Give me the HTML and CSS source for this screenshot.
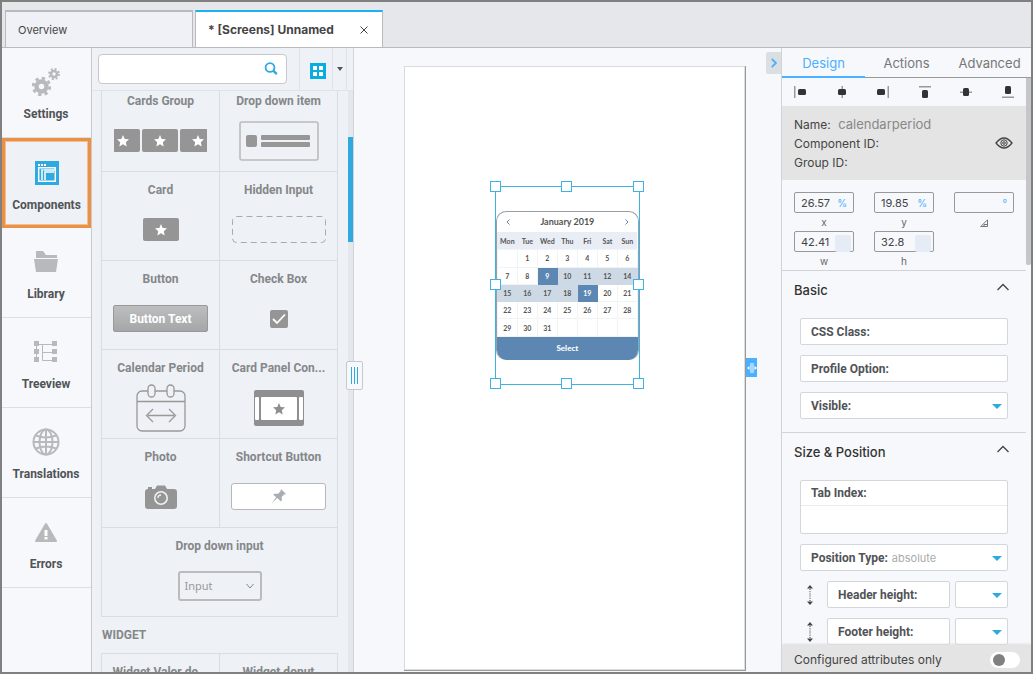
FILE: index.html
```html
<!DOCTYPE html>
<html lang="en">
<head>
<meta charset="utf-8">
<title>Screens editor</title>
<link rel="stylesheet" href="styles.css">
</head>
<body>
<svg class="defs" aria-hidden="true">
  <symbol id="star" viewBox="0 0 12 12"><path fill="currentColor" d="M6 0l1.700 3.900 4.300.4-3.200 2.900.9 4.300L6 9.300l-3.700 2.200.9-4.300L0 4.300l4.300-.4z"/></symbol>
  <symbol id="chevron" viewBox="0 0 14 8"><path fill="none" stroke="#444" stroke-width="1.300" d="M1.500 7L7 1.500 12.500 7"/></symbol>
  <symbol id="updown" viewBox="0 0 8 20"><path fill="#444" d="M4 0l3 3.500H1zM4 20l3-3.500H1z"/><path stroke="#555" stroke-width="1.200" stroke-dasharray="1 1.200" d="M4 4v12"/></symbol>
</svg>

<header class="tabs">
  <button class="tab">Overview</button>
  <button class="tab active"><span>* [Screens] Unnamed</span>
    <svg class="close" viewBox="0 0 8 8"><path stroke="#444" stroke-width="1" d="M.5.5l7 7M7.500.5l-7 7"/></svg>
  </button>
</header>

<div class="workspace">
  <nav class="nav">
    <button class="nav-item"><span class="nav-icon">
      <svg width="28" height="28" viewBox="0 0 28 28" fill="none" stroke="#b8b9bb">
        <circle cx="9.500" cy="18.500" r="5" stroke-width="4.400"/><circle cx="9.500" cy="18.500" r="8.300" stroke-width="2.800" stroke-dasharray="3.300 3.219"/>
        <circle cx="22" cy="6" r="3" stroke-width="2.600"/><circle cx="22" cy="6" r="5" stroke-width="2" stroke-dasharray="2 1.927"/>
      </svg></span>Settings</button>
    <button class="nav-item selected"><span class="nav-icon">
      <svg width="24" height="24" viewBox="0 0 24 24"><path fill="#2eaae0" d="M0 0h24v24H0z"/><path fill="#fff" d="M3 3h2v2H3zM6 3h2v2H6zM9 3h2v2H9z"/><path fill="none" stroke="#fff" stroke-width="1.500" d="M3.700 6.700h16.600v13.600H3.700zM7 8v11M10 19V11h9M8.500 9h11"/></svg></span>Components</button>
    <button class="nav-item"><span class="nav-icon">
      <svg width="26" height="24" viewBox="0 0 26 24" fill="#b8b9bb"><path d="M3 1h7l3 4h11v3H3zM1 9h24l-2 13H3z"/></svg></span>Library</button>
    <button class="nav-item"><span class="nav-icon">
      <svg width="24" height="22" viewBox="0 0 24 22"><path fill="#b8b9bb" d="M0 0h5v5H0zM0 8h5v5H0zM0 16h5v5H0zM18 0h5v5h-5zM18 8h5v5h-5zM18 16h5v5h-5z"/><path fill="none" stroke="#b8b9bb" d="M2.500 4v13M5 3.500h14M8.500 3.500v16H19M8.500 11.500H19"/></svg></span>Treeview</button>
    <button class="nav-item"><span class="nav-icon">
      <svg width="28" height="28" viewBox="0 0 28 28" fill="none" stroke="#b8b9bb" stroke-width="2"><circle cx="14" cy="14" r="12.500"/><ellipse cx="14" cy="14" rx="6.500" ry="12.500"/><path d="M14 1v26M1 14h26M4 7.500q10 4 20 0M4 20.500q10-4 20 0"/></svg></span>Translations</button>
    <button class="nav-item"><span class="nav-icon">
      <svg width="24" height="22" viewBox="0 0 24 22"><path fill="#b8b9bb" stroke="#b8b9bb" stroke-width="2" stroke-linejoin="round" d="M12 3L22 20H2z"/><path fill="#fff" d="M10.500 9h3v6h-3zM10.500 16h3v2.500h-3z"/></svg></span>Errors</button>
  </nav>

  <aside class="palette">
    <div class="palette-bar">
      <div class="search">
        <input type="text" aria-label="Search components">
        <svg width="14" height="14" viewBox="0 0 14 14" fill="none" stroke="#2eaae0"><circle cx="6" cy="5.500" r="4.400" stroke-width="1.800"/><path stroke-width="2.400" d="M9.200 8.700l3.600 3.500"/></svg>
      </div>
      <button class="view-btn" aria-label="Grid view"><svg width="16" height="16" viewBox="0 0 16 16"><path fill="#0aade2" d="M0 0h16v16H0z"/><path fill="#fff" d="M3 3h4v4H3zM9 3h4v4H9zM3 9h4v4H3zM9 9h4v4H9z"/></svg></button>
      <button class="view-menu" aria-label="View options"><svg width="6" height="4" viewBox="0 0 6 4"><path fill="#555" d="M0 0h6L3 4z"/></svg></button>
    </div>
    <div class="palette-body">
      <div class="palette-list">
        <div class="grid first">
          <button class="cell">Cards Group<span class="art cards"><i class="card left"><svg><use href="#star"/></svg></i><i class="card"><svg><use href="#star"/></svg></i><i class="card right"><svg><use href="#star"/></svg></i></span></button>
          <button class="cell">Drop down item<span class="art"><svg width="80" height="40" viewBox="0 0 80 40"><rect x="1" y="1" width="78" height="38" rx="2" fill="none" stroke="#bbb" stroke-width="1.600"/><g fill="#979797"><rect x="7" y="14" width="11" height="12" rx="2"/><rect x="22" y="14" width="49" height="5" rx="1"/><rect x="22" y="21" width="49" height="5" rx="1"/></g></svg></span></button>
          <button class="cell">Card<span class="art"><i class="card"><svg><use href="#star"/></svg></i></span></button>
          <button class="cell">Hidden Input<span class="art"><svg width="94" height="28" viewBox="0 0 94 28"><rect x=".5" y=".5" width="93" height="26" rx="4" fill="none" stroke="#aaa" stroke-dasharray="6 4"/></svg></span></button>
          <button class="cell">Button<span class="art"><span class="btn-art">Button Text</span></span></button>
          <button class="cell">Check Box<span class="art"><svg width="20" height="20" viewBox="0 0 20 20"><rect x="1" y="1" width="18" height="18" rx="2" fill="#959595"/><path fill="none" stroke="#fff" stroke-width="1.800" d="M4 10l4 4 8-8.500"/></svg></span></button>
          <button class="cell">Calendar Period<span class="art"><svg width="50" height="48" viewBox="0 0 50 48" fill="#eef1f6" stroke="#999" stroke-width="1.300"><rect x="1" y="7" width="48" height="40" rx="5"/><path stroke-width="1.600" d="M1 17.500h48"/><rect x="12" y="1" width="7" height="12" rx="3.500"/><rect x="31" y="1" width="7" height="12" rx="3.500"/><path fill="none" d="M12 31.500h26M17 25l-6.500 6.500L17 38M33 25l6.500 6.500L33 38"/></svg></span></button>
          <button class="cell">Card Panel Con...<span class="art"><svg width="50" height="36" viewBox="0 0 50 36"><rect width="50" height="36" rx="2" fill="#8f8f8f"/><rect x="1" y="7" width="4" height="23" rx="1" fill="#fff"/><rect x="45" y="7" width="4" height="23" rx="1" fill="#fff"/><rect x="7" y="7" width="36" height="23" rx="1" fill="#fff"/><use href="#star" x="19" y="13" width="12" height="12" color="#8f8f8f"/></svg></span></button>
          <button class="cell">Photo<span class="art"><svg width="32" height="24" viewBox="0 0 32 24"><path fill="#959595" d="M3 4V2h4v2h3l2-3.500h8L22 4h7q3 0 3 3v14q0 3-3 3H3q-3 0-3-3V7q0-3 3-3z"/><g fill="none" stroke="#eef1f6"><circle cx="16" cy="13" r="6.200" stroke-width="1.600"/><path d="M13 13q0-3 3-3" stroke-width="1.300"/></g></svg></span></button>
          <button class="cell">Shortcut Button<span class="art"><span class="shortcut-art"><svg width="15" height="15" viewBox="0 0 15 15"><path fill="#aaaeb3" d="M10 0l5 5-2 .6-2.300 2.300.2 3.800-1.200.6L6.300 9 .5 14.500 5.200 8.300 2.300 5.700l.8-1 4 .1L9.500 2.200z"/></svg></span></span></button>
          <button class="cell wide">Drop down input<span class="art"><span class="input-art">Input<svg width="8" height="6" viewBox="0 0 8 6"><path fill="none" stroke="#888" d="M.5 1L4 5 7.500 1"/></svg></span></span></button>
        </div>
        <h2 class="group-title">WIDGET</h2>
        <div class="grid">
          <button class="cell">Widget Valor de...</button>
          <button class="cell">Widget donut</button>
        </div>
      </div>
      <div class="scroll-track"><div class="scroll-thumb"></div></div>
    </div>
    <button class="grip" aria-label="Resize palette"><i></i><i></i><i></i></button>
  </aside>

  <main class="canvas">
    <div class="screen">
      <div class="selection">
        <div class="calendar">
          <div class="cal-head"><svg viewBox="0 0 4 6"><path d="M3.500.5L1 3l2.500 2.500"/></svg><span>January 2019</span><svg viewBox="0 0 4 6"><path d="M.5.5L3 3 .5 5.500"/></svg></div>
          <table class="cal-table">
            <thead><tr><th>Mon</th><th>Tue</th><th>Wed</th><th>Thu</th><th>Fri</th><th>Sat</th><th>Sun</th></tr></thead>
            <tbody>
              <tr><td></td><td>1</td><td>2</td><td>3</td><td>4</td><td>5</td><td>6</td></tr>
              <tr><td>7</td><td>8</td><td class="edge">9</td><td class="in">10</td><td class="in">11</td><td class="in">12</td><td class="in">14</td></tr>
              <tr><td class="in">15</td><td class="in">16</td><td class="in">17</td><td class="in">18</td><td class="edge">19</td><td>20</td><td>21</td></tr>
              <tr><td>22</td><td>23</td><td>24</td><td>25</td><td>26</td><td>27</td><td>28</td></tr>
              <tr><td>29</td><td>30</td><td>31</td><td></td><td></td><td></td><td></td></tr>
            </tbody>
          </table>
          <button class="cal-select">Select</button>
        </div>
        <i class="h nw"></i><i class="h n"></i><i class="h ne"></i><i class="h w"></i><i class="h e"></i><i class="h sw"></i><i class="h s"></i><i class="h se"></i>
      </div>
      <button class="screen-grip" aria-label="Resize screen"><svg width="10" height="12" viewBox="0 0 10 12" fill="#fff"><path d="M3.500 1h1v10h-1zM5.500 1h1v10h-1zM0 6l2.500-2v4zM10 6L7.500 4v4z"/></svg></button>
    </div>
    <button class="collapse" aria-label="Collapse panel"><svg width="6" height="10" viewBox="0 0 6 10"><path fill="none" stroke="#4ab0ff" stroke-width="1.800" d="M.8 1L5 5 .8 9"/></svg></button>
  </main>

  <aside class="props">
    <div class="prop-tabs"><button class="on">Design</button><button>Actions</button><button>Advanced</button></div>
    <div class="prop-body">
      <div class="prop-scroll">
        <div class="align-bar">
          <button aria-label="Align left"><svg viewBox="0 0 12 12"><path fill="#999" d="M0 0h1.500v12H0z"/><rect x="4" y="3" width="8" height="6" rx="1.500"/></svg></button>
          <button aria-label="Align center"><svg viewBox="0 0 12 12"><path fill="#999" d="M5.500 0H7v12H5.500z"/><rect x="2" y="3" width="8" height="6" rx="1.500"/></svg></button>
          <button aria-label="Align right"><svg viewBox="0 0 12 12"><path fill="#999" d="M10.500 0H12v12h-1.500z"/><rect y="3" width="8" height="6" rx="1.500"/></svg></button>
          <button aria-label="Align top"><svg viewBox="0 0 12 12"><path fill="#999" d="M0 0h12v1.500H0z"/><rect x="3" y="4" width="6" height="8" rx="1.500"/></svg></button>
          <button aria-label="Align middle"><svg viewBox="0 0 12 12"><path fill="#999" d="M0 5.500h12V7H0z"/><rect x="3" y="2" width="6" height="8" rx="1.500"/></svg></button>
          <button aria-label="Align bottom"><svg viewBox="0 0 12 12"><path fill="#999" d="M0 10.500h12V12H0z"/><rect x="3" width="6" height="8" rx="1.500"/></svg></button>
        </div>
        <div class="identity">
          <div><div>Name: <span class="comp-name">calendarperiod</span></div><div>Component ID:</div><div>Group ID:</div></div>
          <button aria-label="Toggle visibility"><svg width="18" height="12" viewBox="0 0 18 12" fill="none" stroke="#444"><path stroke-width="1.300" d="M1 6q8-10 16 0Q9 16 1 6z"/><circle cx="9" cy="6" r="3.200"/><circle cx="9" cy="6" r="1.300"/></svg></button>
        </div>
        <div class="geometry">
          <label class="geo"><span class="geo-box"><input type="text" value="26.57"><b>%</b></span>x</label>
          <label class="geo"><span class="geo-box"><input type="text" value="19.85"><b>%</b></span>y</label>
          <label class="geo"><span class="geo-box"><input type="text" value="" aria-label="Rotation"><b>°</b></span><svg width="8" height="8" viewBox="0 0 8 8"><path fill="none" stroke="#777" d="M.8 7.500h6.700V.8zM4 7.500V5.500h3"/></svg></label>
          <label class="geo"><span class="geo-box"><input type="text" value="42.41"><i></i></span>w</label>
          <label class="geo"><span class="geo-box"><input type="text" value="32.8"><i></i></span>h</label>
        </div>
        <section class="section">
          <button class="section-head">Basic<svg width="14" height="8"><use href="#chevron"/></svg></button>
          <div class="fields">
            <label class="field">CSS Class:<input type="text"></label>
            <label class="field">Profile Option:<input type="text"></label>
            <label class="field pick">Visible:<select><option></option></select></label>
          </div>
        </section>
        <section class="section">
          <button class="section-head">Size &amp; Position<svg width="14" height="8"><use href="#chevron"/></svg></button>
          <div class="fields">
            <label class="field tall"><span>Tab Index:</span><input type="text"></label>
            <label class="field pick">Position Type:<select><option>absolute</option></select></label>
            <div class="size-row"><svg width="8" height="20"><use href="#updown"/></svg><label class="field">Header height:<input type="text"></label><div class="field pick"><select aria-label="Header height unit"><option></option></select></div></div>
            <div class="size-row"><svg width="8" height="20"><use href="#updown"/></svg><label class="field">Footer height:<input type="text"></label><div class="field pick"><select aria-label="Footer height unit"><option></option></select></div></div>
          </div>
        </section>
      </div>
      <div class="prop-track"><div class="prop-thumb"></div></div>
    </div>
    <label class="prop-foot">Configured attributes only<input type="checkbox" class="toggle"></label>
  </aside>
</div>
</body>
</html>
```
FILE: styles.css
```css
* { box-sizing: border-box; }
body {
  margin: 0; height: 100vh; overflow: hidden;
  display: flex; flex-direction: column;
  border: 2px solid #808080; background: #e6e7eb;
  font: 12px/18px Roboto, sans-serif; color: #555;
}
button { font: inherit; color: inherit; background: none; border: 0; padding: 0; }
input, select { font: inherit; color: inherit; border: 0; background: none; padding: 0; width: 0; min-width: 0; outline: 0; }
svg { flex: none; display: block; }
.defs { position: absolute; width: 0; height: 0; }

.tabs { flex: none; height: 46px; display: flex; gap: 2px; padding: 8px 3px 0; border-bottom: 1px solid #b9babd; font: 11px/16px Inter, sans-serif; }
.tab { width: 188px; display: flex; align-items: center; padding: 0 14px 0 12px; background: #f0f1f7; border: 1px solid #b9babd; border-top: 2px solid #b9babd; border-bottom: 0; color: #444; }
.tab.active { justify-content: space-between; background: #fff; border-top-color: #1cb0f6; font-size: 12px; font-weight: 700; }
.close { width: 8px; height: 8px; }

.workspace { flex: 1; min-height: 0; display: flex; background: #f6f8fb; }
.nav { flex: none; width: 90px; border-right: 1px solid #c8cacd; display: flex; flex-direction: column; }
.nav-item { flex: none; height: 90px; display: flex; flex-direction: column; align-items: center; gap: 7px; padding: 18px 1px 0 0; border-bottom: 1px solid #dcdee1; font-weight: 700; color: #505357; }
.nav-icon { height: 32px; display: flex; align-items: center; }
.nav-item.selected { border: 3px solid #eb9047; background: #eef1f6; padding: 16px 0 0; outline: 1px solid #f4bd90; outline-offset: -4px; }

.palette { flex: none; width: 262px; position: relative; display: flex; flex-direction: column; background: #eef1f6; border-right: 1px solid #d0d3d8; }
.palette-bar { flex: none; height: 43px; display: flex; border-bottom: 1px solid #e0e3e8; padding-left: 6px; }
.search { width: 189px; height: 30px; margin: 6px 12px 0 0; display: flex; align-items: center; padding: 0 8px; background: #fff; border: 1px solid #c6c8cb; border-radius: 4px; }
.search input { flex: 1; }
.view-btn, .view-menu { border-left: 1px solid #e0e3e8; display: flex; align-items: center; justify-content: center; }
.view-btn { width: 33px; padding: 3px 0 0 4px; }
.view-menu { width: 15px; border-right: 1px solid #e0e3e8; }
.palette-body { flex: 1; min-height: 0; display: flex; justify-content: space-between; overflow: hidden; }
.palette-list { width: 237px; margin-left: 9px; }
.grid { display: grid; grid-template-columns: 1fr 1fr; grid-auto-rows: 89px; border-left: 1px solid #d9dce1; border-top: 1px solid #d9dce1; }
.grid.first { margin-top: -9px; }
.cell { display: flex; flex-direction: column; align-items: center; padding-top: 9px; border-right: 1px solid #d9dce1; border-bottom: 1px solid #d9dce1; font-weight: 700; color: #858789; }
.wide { grid-column: 1 / 3; }
.art { flex: 1; display: flex; align-items: center; }
.cards { gap: 2px; }
.card { width: 36px; height: 23px; display: flex; align-items: center; justify-content: center; background: #959595; border-radius: 2px; color: #fff; }
.card svg { width: 12px; height: 12px; }
.card.left { width: 26px; padding-right: 8px; border-radius: 0 2px 2px 0; }
.card.right { width: 27px; padding-left: 8px; border-radius: 2px 0 0 2px; }
.btn-art { width: 95px; height: 27px; line-height: 26px; border: 1px solid #999; border-radius: 2px; background: linear-gradient(#bcbec0, #a4a7a7); color: #fff; }
.shortcut-art { width: 95px; height: 27px; display: flex; align-items: center; justify-content: center; border: 1px solid #b5b7ba; border-radius: 3px; background: #fff; }
.input-art { width: 84px; height: 30px; display: flex; align-items: center; justify-content: space-between; padding: 0 6px 0 5px; border: 2px solid #bbb; border-radius: 3px; font: 11px/16px "Noto Sans", sans-serif; color: #999; }
.group-title { margin: 0; font-size: 12px; line-height: 36px; font-weight: 700; color: #858789; padding-left: 1px; }
.scroll-track { width: 5px; background: #e4e8ee; }
.scroll-thumb { margin-top: 46px; height: 105px; background: #2eaae0; }
.grip { position: absolute; top: 313px; right: -10px; width: 17px; height: 29px; display: flex; align-items: center; justify-content: center; gap: 2px; background: #f6f8fb; border: 1px solid #c6c8cb; border-radius: 2px; z-index: 1; }
.grip i { width: 1px; height: 17px; background: #2eaae0; }

.canvas { flex: 1; min-width: 0; position: relative; display: flex; padding: 18px 35px 1px 50px; }
.screen { flex: 1; position: relative; background: #fff; box-shadow: inset -1px -1px #999, inset 1px 1px #d8dadd, inset -2px -2px #ddd; }
.selection { position: absolute; left: 26.57%; top: 19.85%; width: 42.41%; height: 32.8%; border: 1px solid #3fb2e4; display: flex; flex-direction: column; justify-content: center; }
.h { position: absolute; width: 11px; height: 11px; margin: -6px; border: 1px solid #3fb2e4; background: #fff; }
.nw, .n, .ne { top: 0; } .w, .e { top: 50%; } .sw, .s, .se { top: 100%; }
.nw, .w, .sw { left: 0; } .n, .s { left: 50%; } .ne, .e, .se { left: 100%; }
.calendar { border: 1px solid #9aa0a8; border-bottom: 0; border-radius: 10px; overflow: hidden; background: #fff; font-family: Lato, sans-serif; font-weight: 700; color: #555; }
.cal-head { height: 20px; display: flex; align-items: center; justify-content: space-between; padding: 0 9px; font-size: 9px; line-height: 20px; }
.cal-head svg { width: 4px; height: 6px; fill: none; stroke: #5b87b2; }
.cal-table { width: 100%; height: 105px; border-collapse: collapse; table-layout: fixed; font-size: 7px; line-height: 8px; text-align: center; }
.cal-table th { height: 18px; background: #e9edf5; padding: 0; }
.cal-table td { height: 17px; padding: 0; border: 1px solid #f2f3f5; }
.cal-table .in { background: #cdd9e5; border-color: #cdd9e5; }
.cal-table .edge { background: #5b87b2; border-color: #5b87b2; color: #fff; }
.cal-select { display: block; width: 100%; height: 23px; background: #5b87b2; color: #fff; font-size: 8px; line-height: 22px; font-weight: 900; }
.screen-grip { position: absolute; left: 100%; top: 292px; width: 11px; height: 19px; display: flex; align-items: center; justify-content: center; background: #4ab0ff; }
.collapse { position: absolute; top: 4px; right: 0; width: 15px; height: 22px; display: flex; align-items: center; justify-content: center; background: #dadfe2; border-radius: 2px 0 0 2px; }

.props { flex: none; width: 250px; display: flex; flex-direction: column; border-left: 1px solid #d0d3d8; color: #444; font-family: Inter, sans-serif; }
.prop-tabs { flex: none; height: 30px; display: grid; grid-template-columns: repeat(3, 1fr); border-bottom: 1px solid #999; font-size: 13px; color: #777; }
.prop-tabs .on { color: #4ab0ff; border-bottom: 2px solid #4ab0ff; margin-bottom: -1px; padding-top: 2px; }
.prop-body { flex: 1; min-height: 0; display: flex; overflow: hidden; }
.prop-scroll { flex: 1; min-width: 0; }
.prop-track { flex: none; width: 5px; }
.prop-thumb { height: 187px; background: #c5c6c8; border-radius: 0 0 2px 2px; }
.align-bar { height: 28px; display: flex; justify-content: space-between; align-items: center; padding: 0 12px; }
.align-bar svg { width: 12px; height: 12px; fill: #333; }
.identity { height: 74px; display: flex; align-items: center; justify-content: space-between; padding: 0 13px 0 12px; background: #e4e4e4; font-size: 12px; line-height: 19px; }
.comp-name { font-size: 13px; line-height: 18px; color: #888; margin-left: 4px; }
.geometry { display: grid; grid-template-columns: repeat(3, 60px); column-gap: 20px; padding: 12px 12px 0; border-bottom: 1px solid #d0d3d8; }
.geo { height: 39px; display: flex; flex-direction: column; align-items: center; font-size: 10px; line-height: 16px; color: #666; }
.geo > svg { margin: 5px 0 0; }
.geo-box { width: 60px; height: 21px; margin-bottom: 1px; display: flex; align-items: center; padding: 0 6px; border: 1px solid #999; border-radius: 2px; color: #444; }
.geo-box input { flex: 1; font-size: 11px; }
.geo-box b { font-weight: 400; color: #4ab0ff; }
.geo-box i { width: 16px; height: 17px; margin: 3px -4px 0 0; background: #e5ecf6; border-radius: 2px; }
.section { border-bottom: 1px solid #d0d3d8; padding-bottom: 13px; }
.section-head { width: 100%; height: 37px; display: flex; justify-content: space-between; align-items: center; padding: 0 16px 0 12px; font-size: 13px; font-weight: 500; color: #333; }
.section-head svg { margin-bottom: 6px; }
.fields { display: flex; flex-direction: column; gap: 10px; padding: 10px 18px 0; }
.field { height: 27px; display: flex; align-items: center; gap: 4px; padding: 0 5px 0 10px; background: #fff; border: 1px solid #d3d6da; border-radius: 2px; font: 700 12px/18px Roboto, sans-serif; color: #505357; white-space: nowrap; }
.field input, .field select { flex: 1; font-weight: 400; }
.field select { appearance: none; color: #aaa; font-family: Inter, sans-serif; font-size: 11px; }
.pick::after { content: ""; flex: none; border: 5px solid transparent; border-top-color: #2eaae0; border-bottom: 0; margin-top: 2px; }
.field.tall { height: 54px; flex-direction: column; align-items: stretch; gap: 0; padding: 0; }
.tall span { padding: 3px 10px; border-bottom: 1px solid #e8eaec; }
.tall input { width: 100%; padding: 0 10px; }
.size-row { display: flex; align-items: center; padding-left: 6px; }
.size-row .field { flex: 1; margin-left: 13px; }
.size-row .pick { flex: none; width: 53px; margin-left: 5px; }
.prop-foot { flex: none; height: 27px; display: flex; align-items: center; justify-content: space-between; padding: 3px 11px 0 12px; background: #e4e4e4; font-size: 12px; box-shadow: 0 -1px 2px #ddd; z-index: 1; }
.toggle { appearance: none; width: 30px; height: 16px; margin: 0; padding: 2px 3px; border-radius: 8px; background: #fff; }
.toggle::before { content: ""; display: block; width: 12px; height: 12px; border-radius: 50%; background: #808080; }
```
